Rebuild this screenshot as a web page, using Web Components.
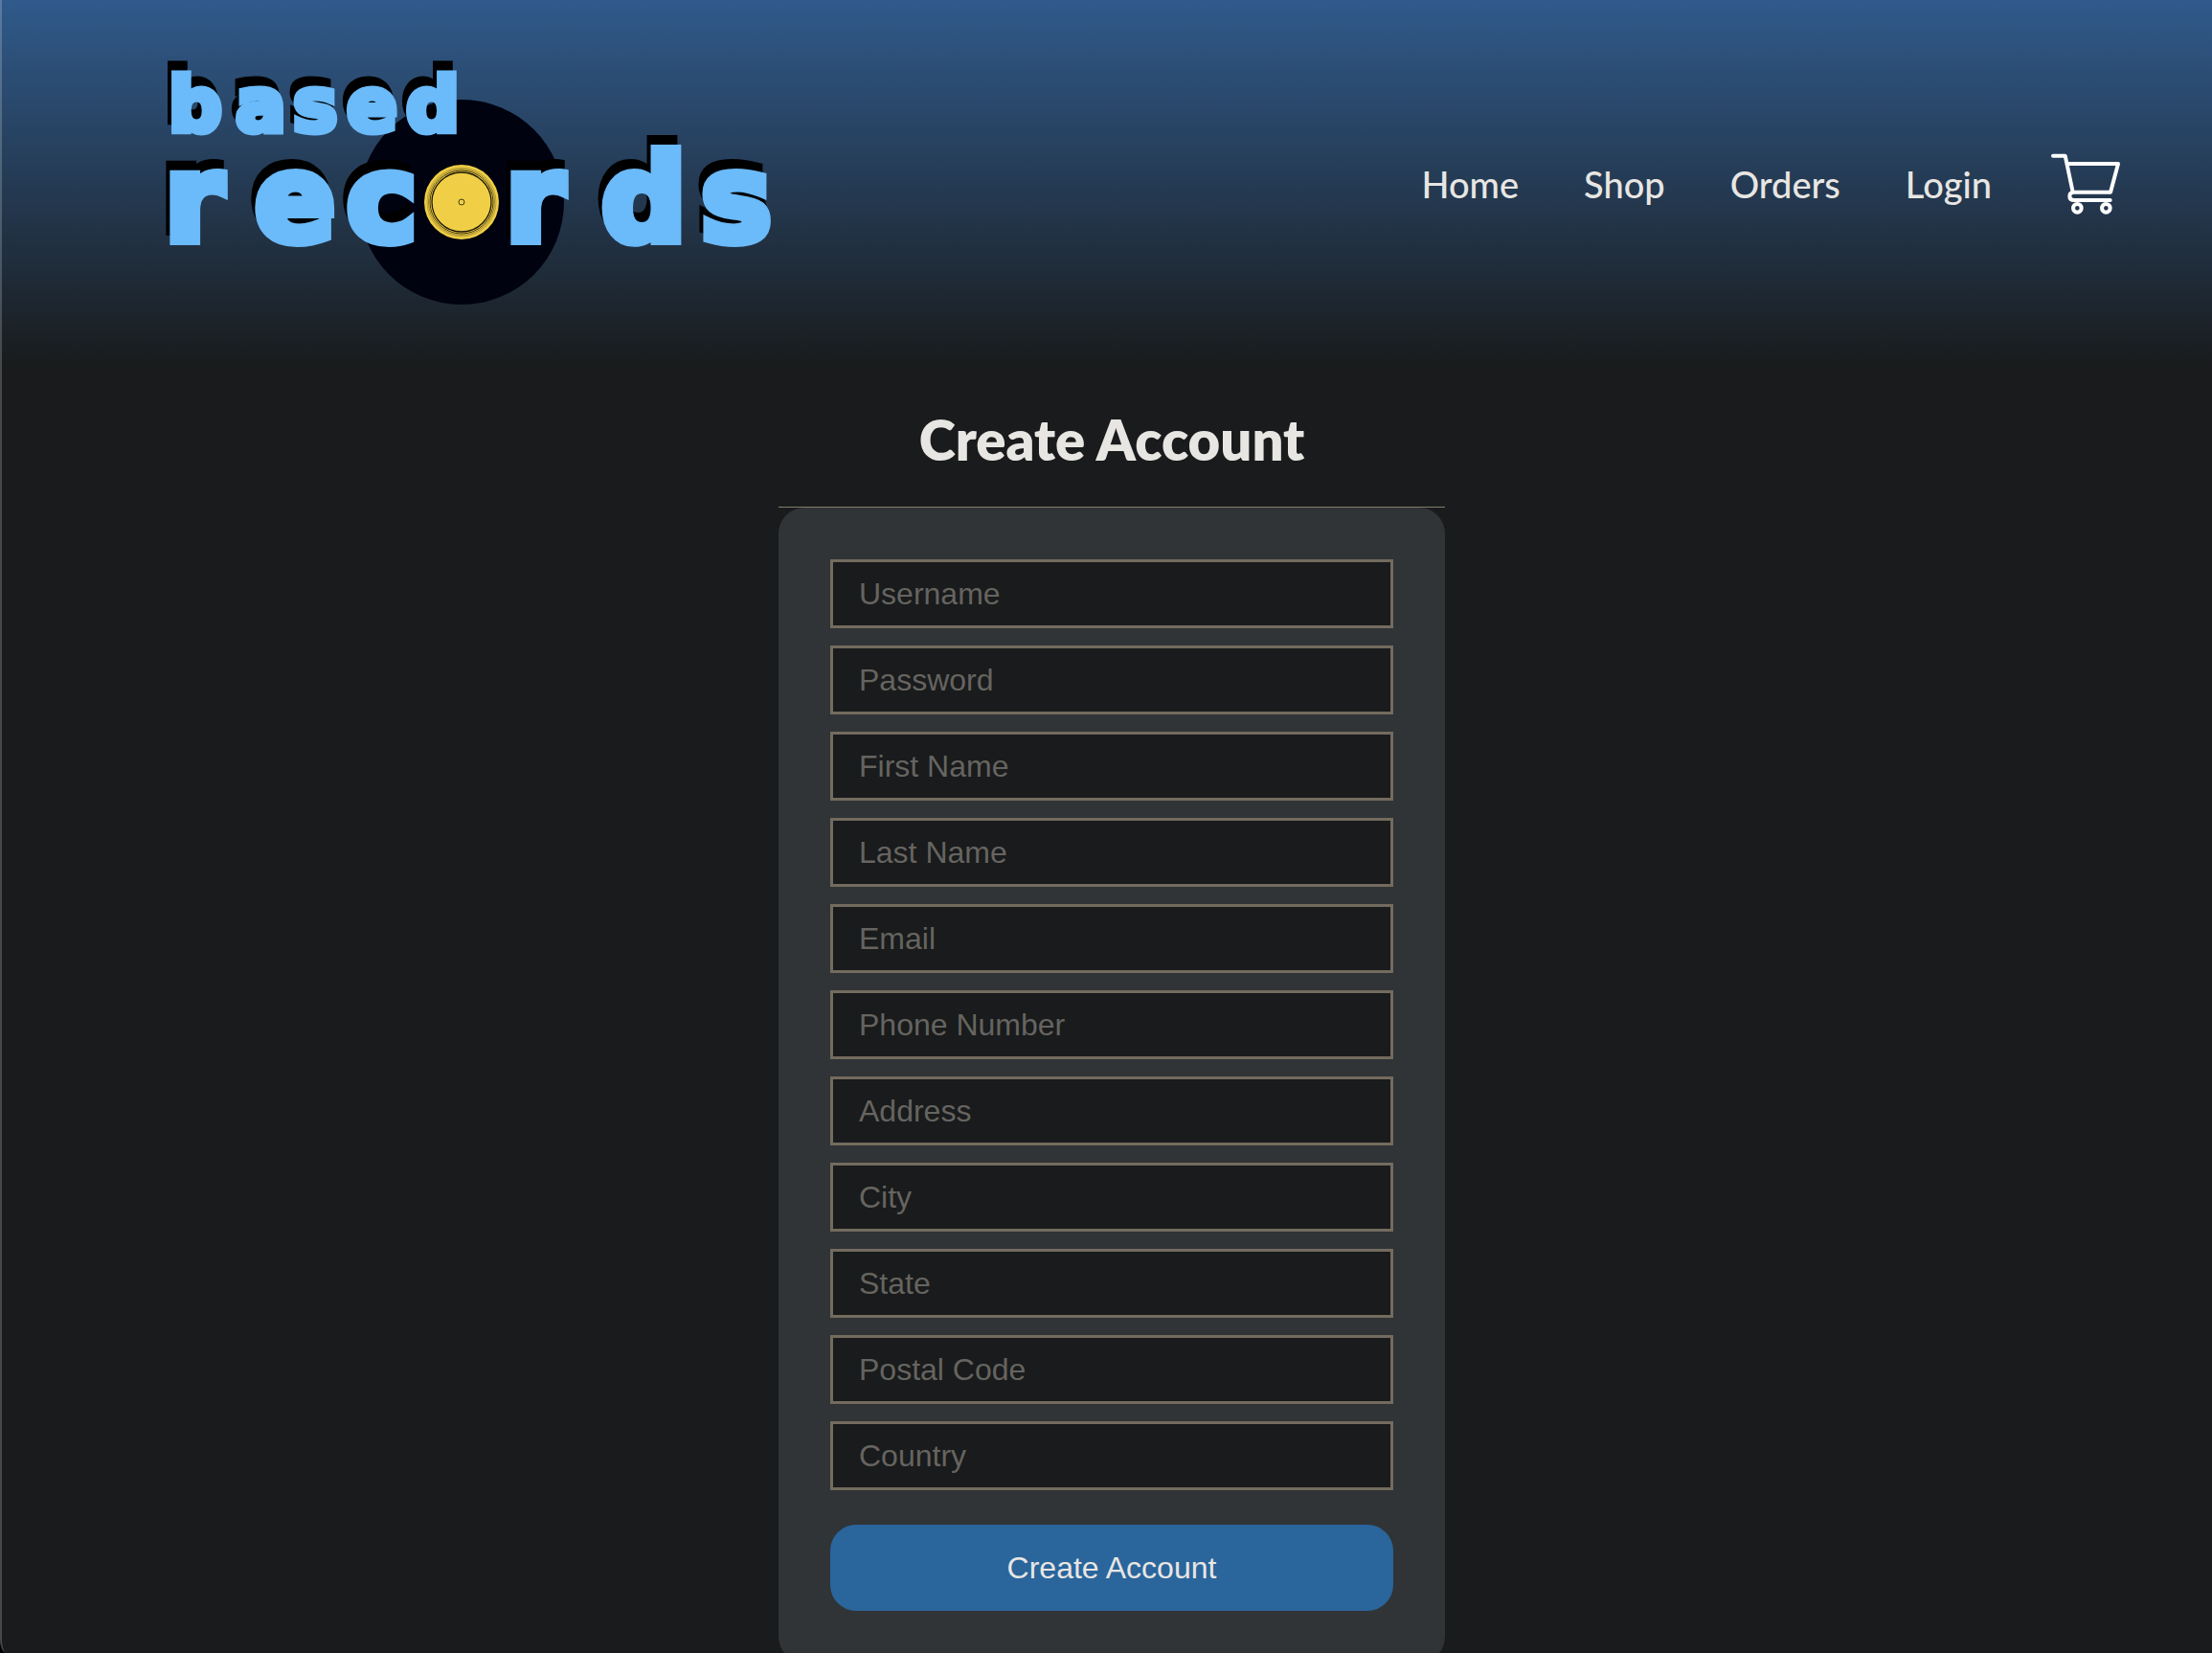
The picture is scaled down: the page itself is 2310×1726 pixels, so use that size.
<!DOCTYPE html>
<html lang="en">
<head>
<meta charset="utf-8">
<title>Based Records - Create Account</title>
<style>
  html, body { margin: 0; height: 100%; background: #000; }
  body { overflow: hidden; font-family: Lato, sans-serif; color: #e8e6e3; }
</style>
</head>
<body>
<app-shell>
  <site-header slot="header">
    <brand-logo slot="brand"></brand-logo>
    <nav-link href="#home">Home</nav-link>
    <nav-link href="#shop">Shop</nav-link>
    <nav-link href="#orders">Orders</nav-link>
    <nav-link href="#login">Login</nav-link>
    <cart-link slot="cart"></cart-link>
  </site-header>
  <account-form heading="Create Account">
    <text-field label="Username" autocomplete="username"></text-field>
    <text-field label="Password" type="password" autocomplete="new-password"></text-field>
    <text-field label="First Name"></text-field>
    <text-field label="Last Name"></text-field>
    <text-field label="Email" type="email"></text-field>
    <text-field label="Phone Number" type="tel"></text-field>
    <text-field label="Address"></text-field>
    <text-field label="City"></text-field>
    <text-field label="State"></text-field>
    <text-field label="Postal Code"></text-field>
    <text-field label="Country"></text-field>
    <submit-button slot="action">Create Account</submit-button>
  </account-form>
</app-shell>
<script>
class BaseElement extends HTMLElement {
  constructor() {
    super();
    this.attachShadow({ mode: 'open' }).innerHTML = this.constructor.markup;
  }
}

customElements.define('app-shell', class extends BaseElement {
  static markup = `
    <style>
      :host { display: block; box-sizing: border-box; height: 100vh; overflow: hidden;
        border-left: 2px solid rgba(255,255,255,.2); border-bottom-left-radius: 7px 14px;
        background: linear-gradient(#305a8b, #191b1c 384px) border-box no-repeat #191b1c; }
      main { padding-left: 10px; }
    </style>
    <slot name="header"></slot>
    <main><slot></slot></main>`;
});

customElements.define('site-header', class extends BaseElement {
  static markup = `
    <style>
      :host { display: block; }
      header { display: flex; align-items: center; justify-content: space-between;
        height: 384px; padding: 0 96px 0 168px; }
      nav { display: flex; align-items: center; gap: 62px; }
      .links { display: flex; gap: 68px; }
    </style>
    <header>
      <slot name="brand"></slot>
      <nav aria-label="Main"><div class="links"><slot></slot></div><slot name="cart"></slot></nav>
    </header>`;
});

customElements.define('nav-link', class extends BaseElement {
  static markup = `
    <style>
      :host { display: block; }
      a { color: inherit; text-decoration: none; font-size: 38px; font-weight: 500; line-height: 46px; }
    </style>
    <a><slot></slot></a>`;
  connectedCallback() {
    this.shadowRoot.querySelector('a').href = this.getAttribute('href');
  }
});

customElements.define('cart-link', class extends BaseElement {
  static markup = `
    <style>
      :host, a, svg { display: block; }
      svg { width: 72px; height: 64px; }
    </style>
    <a href="#cart" aria-label="Cart">
      <svg viewBox="66 60 216 192" fill="none" stroke="#fff" stroke-width="12" stroke-linecap="round" stroke-linejoin="round" aria-hidden="true">
        <path d="M72 68H110L134 182M116 93H276L252 182H138C128 182 124 187 124 195C124 203 129 207 138 207H251"/>
        <circle cx="148" cy="232" r="13"/><circle cx="238" cy="232" r="13"/>
      </svg>
    </a>`;
});

customElements.define('brand-logo', class extends BaseElement {
  static markup = `
    <style>
      :host, a, svg { display: block; }
      svg { width: 640px; height: 252px; overflow: visible; }
      text { font-family: "DejaVu Sans", sans-serif; font-weight: 700; fill: #6bbaf9; stroke: #6bbaf9; }
      .small { font-size: 78px; stroke-width: 7px; }
      .large { font-size: 124px; stroke-width: 10px; }
      .words { filter: drop-shadow(-4px -10px 0 #000); }
    </style>
    <a href="#home" aria-label="Based Records">
      <svg viewBox="170 66 640 252" aria-hidden="true">
        <circle cx="482" cy="211" r="107" fill="#00020f"/>
        <g class="words">
          <text class="small" x="176 246 306 362 424" y="137">based</text>
          <text class="large" x="172 266 362" y="251">rec</text>
          <text class="large" x="528 628 732" y="251">rds</text>
        </g>
        <circle cx="482" cy="211" r="39" fill="#f0cf46"/>
        <g fill="none" stroke="#1b1708">
          <circle cx="482" cy="211" r="31" stroke-width="1.3"/>
          <circle cx="482" cy="211" r="33" stroke-width=".8"/>
          <circle cx="482" cy="211" r="34.5" stroke-width=".6" opacity=".7"/>
          <circle cx="482" cy="211" r="36" stroke-width=".5" opacity=".5"/>
          <circle cx="482" cy="211" r="3" stroke-width=".8"/>
        </g>
      </svg>
    </a>`;
});

customElements.define('account-form', class extends BaseElement {
  static markup = `
    <style>
      :host { display: block; width: 696px; max-width: 100%; margin: 0 auto; }
      h1 { margin: 0; padding: 39px 0 34px; font-size: 58px; line-height: 72px; font-weight: 800; text-align: center;
        border-bottom: 1px solid #857c6e; }
      form { display: flex; flex-direction: column; gap: 36px; padding: 54px; border-radius: 27px; background: #303436; }
      .fields { display: flex; flex-direction: column; gap: 18px; }
    </style>
    <h1></h1>
    <form>
      <div class="fields"><slot></slot></div>
      <slot name="action"></slot>
    </form>`;
  connectedCallback() {
    this.shadowRoot.querySelector('h1').textContent = this.getAttribute('heading');
  }
});

customElements.define('text-field', class extends BaseElement {
  static markup = `
    <style>
      :host { display: block; }
      input { display: block; box-sizing: border-box; width: 100%; height: 72px; padding: 0 27px;
        border: 3px solid #736b5e; border-radius: 0; outline: 0; background: #191b1c; color: #e8e6e3;
        font: 32px "Liberation Sans", Arial, sans-serif; }
      input::placeholder { color: #666460; opacity: 1; }
    </style>
    <input>`;
  connectedCallback() {
    const input = this.shadowRoot.querySelector('input');
    const label = this.getAttribute('label');
    input.type = this.getAttribute('type') || 'text';
    input.autocomplete = this.getAttribute('autocomplete') || 'on';
    input.placeholder = label;
    input.setAttribute('aria-label', label);
  }
});

customElements.define('submit-button', class extends BaseElement {
  static markup = `
    <style>
      :host { display: block; }
      button { display: block; width: 100%; height: 90px; padding: 0; border: 0; border-radius: 27px;
        background: #2a659c; color: #e8e6e3; font: 32px "Liberation Sans", Arial, sans-serif; cursor: pointer; }
    </style>
    <button type="button"><slot></slot></button>`;
});
</script>
</body>
</html>
